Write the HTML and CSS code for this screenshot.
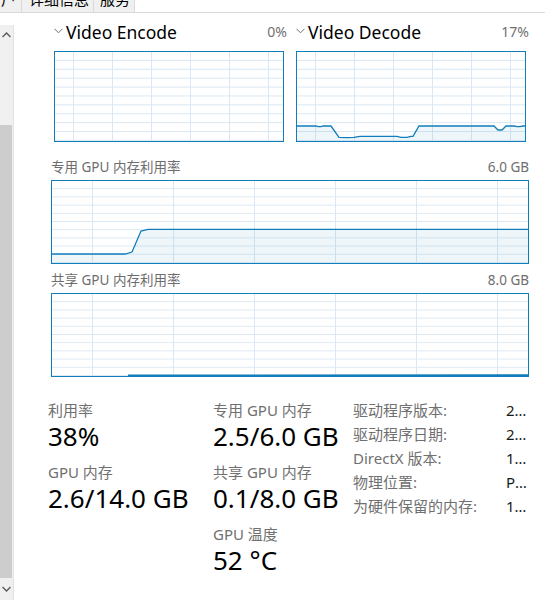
FILE: index.html
```html
<!DOCTYPE html>
<html lang="zh-CN">
<head>
<meta charset="utf-8">
<title>GPU</title>
<link rel="stylesheet" href="styles.css">
</head>
<body>
<div class="tabs">
  <div class="tab tab-first"><span>用户</span></div>
  <div class="tab tab-details">详细信息</div>
  <div class="tab tab-services">服务</div>
</div>
<div class="main">
  <div class="scrollbar">
    <div class="sb-btn">
      <svg width="9" height="6" viewBox="0 0 9 6"><polyline points="0.5,5 4.5,1 8.5,5" fill="none" stroke="#606060" stroke-width="1.5"/></svg>
    </div>
    <div class="sb-space"></div>
    <div class="sb-thumb"></div>
    <div class="sb-btn sb-btn-down">
      <svg width="9" height="6" viewBox="0 0 9 6"><polyline points="0.5,1 4.5,5 8.5,1" fill="none" stroke="#606060" stroke-width="1.5"/></svg>
    </div>
  </div>
  <div class="content">
    <div class="video-row">
      <div class="vpanel">
        <div class="vhead">
          <svg class="chev" width="9" height="6" viewBox="0 0 9 6"><polyline points="0.5,0.8 4.5,4.8 8.5,0.8" fill="none" stroke="#707070" stroke-width="1"/></svg>
          <span class="vtitle">Video Encode</span>
          <span class="vpct">0%</span>
        </div>
        <div class="graph graph-small"></div>
      </div>
      <div class="vpanel">
        <div class="vhead">
          <svg class="chev" width="9" height="6" viewBox="0 0 9 6"><polyline points="0.5,0.8 4.5,4.8 8.5,0.8" fill="none" stroke="#707070" stroke-width="1"/></svg>
          <span class="vtitle">Video Decode</span>
          <span class="vpct">17%</span>
        </div>
        <div class="graph graph-small">
          <svg class="plot" viewBox="0 0 228 89" preserveAspectRatio="none">
            <path d="M0,74 L19,74 L21,74.7 L24,74.7 L26,74 L34,74 L42,85.3 L50,85.7 L57,85.3 L63,84.3 L100,84.3 L104,85.3 L110,85.3 L114,84.3 L116,84.3 L122,74 L197,74 L201,78 L205,78 L209,74 L217,74 L220,74.7 L223,74.7 L226,74 L228,74 L228,89 L0,89 Z" class="area"/>
            <path d="M0,74 L19,74 L21,74.7 L24,74.7 L26,74 L34,74 L42,85.3 L50,85.7 L57,85.3 L63,84.3 L100,84.3 L104,85.3 L110,85.3 L114,84.3 L116,84.3 L122,74 L197,74 L201,78 L205,78 L209,74 L217,74 L220,74.7 L223,74.7 L226,74 L228,74" class="line"/>
          </svg>
        </div>
      </div>
    </div>

    <div class="ghead first-ghead"><span>专用 GPU 内存利用率</span><span>6.0 GB</span></div>
    <div class="graph graph-big">
      <svg class="plot" viewBox="0 0 476 82" preserveAspectRatio="none">
        <path d="M0,73 L73,73 L80,71 L89,50 L96,48.3 L476,48.3 L476,82 L0,82 Z" class="area"/>
        <path d="M0,73 L73,73 L80,71 L89,50 L96,48.3 L476,48.3" class="line"/>
      </svg>
    </div>

    <div class="ghead"><span>共享 GPU 内存利用率</span><span>8.0 GB</span></div>
    <div class="graph graph-big">
      <svg class="plot" viewBox="0 0 476 82" preserveAspectRatio="none">
        <path d="M76,81.4 L476,81.2" class="line line-thick"/>
      </svg>
    </div>

    <div class="stats">
      <div class="stat-col col1">
        <div class="stat">
          <div class="slabel">利用率</div>
          <div class="svalue">38%</div>
        </div>
        <div class="stat">
          <div class="slabel">GPU 内存</div>
          <div class="svalue">2.6/14.0 GB</div>
        </div>
      </div>
      <div class="stat-col col2">
        <div class="stat">
          <div class="slabel">专用 GPU 内存</div>
          <div class="svalue">2.5/6.0 GB</div>
        </div>
        <div class="stat">
          <div class="slabel">共享 GPU 内存</div>
          <div class="svalue">0.1/8.0 GB</div>
        </div>
        <div class="stat">
          <div class="slabel">GPU 温度</div>
          <div class="svalue">52 °C</div>
        </div>
      </div>
      <div class="info">
        <div class="irow"><span class="ilabel">驱动程序版本:</span><span class="ivalue">27.21.14.6109</span></div>
        <div class="irow"><span class="ilabel">驱动程序日期:</span><span class="ivalue">2020/12/2</span></div>
        <div class="irow"><span class="ilabel">DirectX 版本:</span><span class="ivalue">12 (FL 12.1)</span></div>
        <div class="irow"><span class="ilabel">物理位置:</span><span class="ivalue">PCI 总线 1、设备 0、功能 0</span></div>
        <div class="irow"><span class="ilabel">为硬件保留的内存:</span><span class="ivalue">128 MB</span></div>
      </div>
    </div>
  </div>
</div>
</body>
</html>
```

FILE: styles.css
```css
* { box-sizing: border-box; }

html, body {
  margin: 0;
  padding: 0;
  background: #ffffff;
}

body {
  width: 545px;
  height: 602px;
  overflow: hidden;
  font-family: "Noto Sans", "Noto Sans CJK SC", sans-serif;
  color: #000;
}

/* tabs */
.tabs {
  display: flex;
  height: 13px;
  border-bottom: 1px solid #d9d9d9;
  overflow: hidden;
}

.tab {
  background: #f0f0f0;
  border-right: 1px solid #d9d9d9;
  font-size: 15px;
  line-height: 20px;
  height: 23px;
  margin-top: -11px;
  white-space: nowrap;
  overflow: hidden;
  color: #000;
}

.tab-first {
  width: 22px;
  display: flex;
  justify-content: flex-end;
  padding-right: 5px;
}

.tab-details {
  width: 72px;
  padding-left: 7px;
}

.tab-services {
  width: 41px;
  padding-left: 6px;
}

/* main */
.main {
  display: flex;
}

.scrollbar {
  width: 14px;
  height: 575px;
  margin-top: 12px;
  background: #f0f0f0;
  border-right: 1px solid #e2e2e2;
  display: flex;
  flex-direction: column;
  flex-shrink: 0;
}

.sb-btn {
  height: 20px;
  display: flex;
  align-items: center;
  justify-content: center;
  padding-right: 1px;
}

.sb-btn-down {
  height: 22px;
}

.sb-space {
  height: 80px;
}

.sb-thumb {
  height: 453px;
  width: 12px;
  background: #cdcdcd;
}

.content {
  flex: 1;
  padding: 7px 0 0 34px;
}

/* video row */
.video-row {
  display: flex;
  gap: 9px;
  margin-left: 6px;
}

.vpanel {
  width: 233px;
}

.vhead {
  display: flex;
  align-items: center;
  height: 24px;
  margin-bottom: 7px;
}

.chev {
  margin-right: 3px;
  margin-top: -2px;
}

.vtitle {
  font-size: 17.5px;
  line-height: 24px;
}

.vpct {
  margin-left: auto;
  font-size: 14px;
  color: #707070;
  line-height: 24px;
}

/* graphs */
.graph {
  position: relative;
  border: 1px solid #117dbb;
  background-color: #ffffff;
}

.graph-small {
  width: 230px;
  height: 91px;
  background-image:
    linear-gradient(to right, #d9e8f4 1px, transparent 1px),
    linear-gradient(to top, #d9e8f4 1px, transparent 1px);
  background-size: 39px 100%, 100% 8.9px;
  background-position: 18px 0, 0 0;
}

.graph-big {
  width: 478px;
  height: 84px;
  margin-left: 3px;
  background-image:
    linear-gradient(to right, #d9e8f4 1px, transparent 1px),
    linear-gradient(to top, #d9e8f4 1px, transparent 1px);
  background-size: 81px 100%, 100% 8.2px;
  background-position: 40px 0, 0 0;
}

.plot {
  display: block;
  width: 100%;
  height: 100%;
}

.area {
  fill: rgba(17, 125, 187, 0.065);
  stroke: none;
}

.line {
  fill: none;
  stroke: #117dbb;
  stroke-width: 1.3;
}

.line-thick {
  stroke-width: 1.8;
}

.ghead {
  display: flex;
  justify-content: space-between;
  margin-left: 3px;
  width: 478px;
  height: 20px;
  line-height: 20px;
  font-size: 13.5px;
  color: #6d6d6d;
  margin-top: 6px;
  margin-bottom: 3px;
}

.first-ghead {
  margin-top: 15px;
}

/* stats */
.stats {
  display: flex;
  margin-top: 23px;
}

.stat-col {
  display: flex;
  flex-direction: column;
}

.col1 {
  width: 165px;
}

.col2 {
  width: 140px;
}

.stat {
  margin-bottom: 10px;
}

.slabel {
  font-size: 15px;
  line-height: 20px;
  color: #707070;
}

.svalue {
  font-size: 26px;
  line-height: 32px;
  color: #000;
}

.info {
  display: flex;
  flex-direction: column;
  margin-top: -2px;
}

.irow {
  display: flex;
  height: 24px;
  line-height: 24px;
  font-size: 15px;
}

.ilabel {
  width: 153px;
  color: #707070;
  white-space: nowrap;
}

.ivalue {
  width: 25px;
  white-space: nowrap;
  overflow: hidden;
  text-overflow: ellipsis;
  color: #1a1a1a;
}
```
